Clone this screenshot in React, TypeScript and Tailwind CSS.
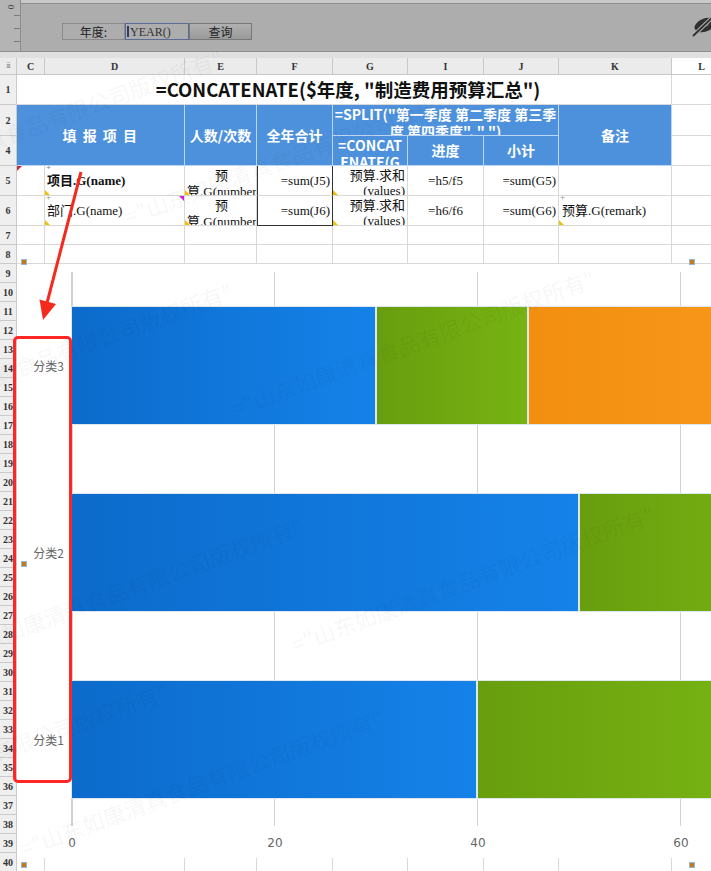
import React from 'react'

const GRID = 'grid grid-cols-[17px_28px_140px_72px_76px_75px_76px_75px_113px_60px]'
const CELL = 'relative overflow-hidden border-r border-b border-[#d8d8d8] bg-white'
const HEAD =
  "flex items-center justify-center overflow-hidden border-r border-b border-[#bcd6f2] bg-[#4d91dc] text-[14px] font-bold text-white font-['Noto_Sans_CJK_SC',sans-serif]"
const RN = 'flex items-center justify-center border-r border-b border-[#cacaca] bg-[#efefef] text-[10px] font-bold text-[#333]'
const COLHEAD = 'flex items-center justify-center border-r border-b border-[#c8c8c8]'

const SCALE = 10.15

type Color = 'blue' | 'green' | 'orange'

const segStyle: Record<Color, string> = {
  blue: 'bg-linear-to-r from-[#0c6bcb] to-[#1582e9]',
  green: 'bg-linear-to-r from-[#689e0e] to-[#77b313]',
  orange: 'bg-linear-to-r from-[#f28f10] to-[#f8981b]',
}

const bars: { label: string; segs: { v: number; c: Color }[] }[] = [
  { label: '分类3', segs: [{ v: 30, c: 'blue' }, { v: 15, c: 'green' }, { v: 25, c: 'orange' }] },
  { label: '分类2', segs: [{ v: 50, c: 'blue' }, { v: 20, c: 'green' }] },
  { label: '分类1', segs: [{ v: 40, c: 'blue' }, { v: 25, c: 'green' }] },
]

const ticks = [0, 20, 40, 60]

// faint copyright watermark, repeated over the page
const watermarks = [
  'left-[-140px] top-[172px]',
  'left-[125px] top-[200px]',
  'left-[-130px] top-[405px]',
  'left-[232px] top-[392px]',
  'left-[-60px] top-[640px]',
  'left-[292px] top-[628px]',
  'left-[-195px] top-[805px]',
  'left-[20px] top-[832px]',
]

const handles = [
  'left-[21px] top-[259px]',
  'left-[689px] top-[259px]',
  'left-[21px] top-[561px]',
  'left-[21px] top-[862px]',
  'left-[689px] top-[862px]',
]

function YellowMark() {
  return <div className="absolute bottom-0 left-0 h-0 w-0 border-t-[5px] border-l-[5px] border-t-transparent border-l-[#f2c200]" />
}

function Plus() {
  return <span className="absolute left-[1px] top-[-5px] text-[9px] leading-[12px] text-[#888]">+</span>
}

export default function App() {
  return (
    <div className="relative h-[871px] w-[711px] overflow-hidden bg-white font-['Liberation_Serif','Noto_Sans_CJK_SC',serif] text-[#111]">
      {/* report parameter toolbar */}
      <div className="flex h-[52px] border-b border-[#8d8d8d] bg-[#adadad]">
        <div className="flex w-[21px] flex-col border-r border-[#8d8d8d] bg-[#b4b4b4]">
          <div className="flex h-[14px] rotate-90 items-center justify-center text-[9px] text-[#444]">0</div>
          <div className="flex flex-col items-end gap-[12px] pt-[1px]">
            <div className="h-px w-[6px] bg-[#7a7a7a]" />
            <div className="h-px w-[6px] bg-[#7a7a7a]" />
            <div className="h-px w-[6px] bg-[#7a7a7a]" />
          </div>
        </div>
        <div className="flex min-w-0 flex-1 flex-col">
          <div className="h-[4px] border-b border-[#8d8d8d] bg-[#c9c9c9]" />
          <div className="flex flex-1 items-start pl-[41px] pt-[5px]">
            <div className="mt-[14px] flex h-[17px] text-[12px] font-['Noto_Sans_CJK_SC',sans-serif] text-[#222]">
              <div className="flex w-[63px] items-center justify-center border border-[#8b8b8b]">年度:</div>
              <div className="flex w-[64px] items-center border border-[#5b6d94] pl-[1px] font-['Liberation_Serif',serif] text-[12px] text-[#333]">
                <span className="mr-[1px] h-[11px] w-[2px] bg-[#2c3e6a]" />
                YEAR()
              </div>
              <div className="flex w-[63px] items-center justify-center border border-[#787878] bg-linear-to-b from-[#b0b0b0] to-[#9a9a9a]">
                查询
              </div>
            </div>
            <svg className="-mr-[6px] ml-auto mt-[4px] shrink-0" width="28" height="24" viewBox="0 0 28 24">
              <ellipse cx="16" cy="12" rx="11" ry="6.5" transform="rotate(-22 16 12)" fill="#2f2f2f" />
              <ellipse cx="17" cy="11.5" rx="3" ry="2.2" transform="rotate(-22 17 11.5)" fill="#5a5a5a" />
              <line x1="4" y1="23" x2="27" y2="1" stroke="#adadad" strokeWidth="4" />
              <line x1="4" y1="23" x2="27" y2="1" stroke="#2f2f2f" strokeWidth="1.8" />
            </svg>
          </div>
        </div>
      </div>
      <div className="h-[6px] bg-[#e0e0e0]" />

      {/* column headers */}
      <div className={`${GRID} h-[17px] bg-[#ebebeb] text-[10px] font-bold text-[#333]`}>
        <div className={`${COLHEAD} text-[8px] font-normal tracking-[-1px] text-[#888]`}>iii</div>
        <div className={COLHEAD}>C</div>
        <div className={COLHEAD}>D</div>
        <div className={COLHEAD}>E</div>
        <div className={COLHEAD}>F</div>
        <div className={COLHEAD}>G</div>
        <div className={COLHEAD}>I</div>
        <div className={COLHEAD}>J</div>
        <div className={COLHEAD}>K</div>
        <div className={`${COLHEAD} bg-white`}>L</div>
      </div>

      {/* report template rows */}
      <div className={`${GRID} grid-rows-[30px_31px_30px_30px_30px_19px_19px] text-[13px]`}>
        <div className={`${RN} col-start-1 row-start-1`}>1</div>
        <div className={`${RN} col-start-1 row-start-2`}>2</div>
        <div className={`${RN} col-start-1 row-start-3`}>4</div>
        <div className={`${RN} col-start-1 row-start-4`}>5</div>
        <div className={`${RN} col-start-1 row-start-5`}>6</div>
        <div className={`${RN} col-start-1 row-start-6`}>7</div>
        <div className={`${RN} col-start-1 row-start-7`}>8</div>

        <div className={`${CELL} col-span-8 col-start-2 row-start-1 flex items-center justify-center whitespace-nowrap pl-[8px] font-['Noto_Sans_CJK_SC',sans-serif] text-[18.5px] font-bold`}>
          =CONCATENATE($年度, "制造费用预算汇总")
        </div>
        <div className={`${CELL} col-start-10 row-start-1`} />

        <div className={`${HEAD} col-span-2 col-start-2 row-span-2 row-start-2 tracking-[1.5px]`}>填 报 项 目</div>
        <div className={`${HEAD} col-start-4 row-span-2 row-start-2`}>人数/次数</div>
        <div className={`${HEAD} col-start-5 row-span-2 row-start-2`}>全年合计</div>
        <div className={`${HEAD} col-span-3 col-start-6 row-start-2 items-start pt-[1px] text-center text-[13.5px] leading-[17px]`}>
          =SPLIT("第一季度 第二季度 第三季度 第四季度", " ")
        </div>
        <div className={`${HEAD} col-start-9 row-span-2 row-start-2`}>备注</div>
        <div className={`${CELL} col-start-10 row-start-2`} />
        <div className={`${HEAD} col-start-6 row-start-3 items-start break-all px-[3px] pt-[1px] text-center text-[13.5px] leading-[17px]`}>
          =CONCATENATE(G3,"预算")
        </div>
        <div className={`${HEAD} col-start-7 row-start-3`}>进度</div>
        <div className={`${HEAD} col-start-8 row-start-3`}>小计</div>
        <div className={`${CELL} col-start-10 row-start-3`} />

        {/* row 5 */}
        <div className={`${CELL} col-start-2 row-start-4`}>
          <div className="absolute left-0 top-0 h-0 w-0 border-r-[5px] border-t-[5px] border-r-transparent border-t-[#c0303a]" />
        </div>
        <div className={`${CELL} col-start-3 row-start-4 flex items-center pl-[2px] font-bold`}>
          <Plus />
          项目.G(name)
          <YellowMark />
        </div>
        <div className={`${CELL} col-start-4 row-start-4 pl-[2px] pt-[2px] text-center leading-[16px]`}>
          预算.G(number)
          <YellowMark />
        </div>
        <div className={`${CELL} col-start-5 row-start-4 flex items-center justify-end border-l border-x-[#333] pr-[2px]`}>=sum(J5)</div>
        <div className={`${CELL} col-start-6 row-start-4 pr-[2px] pt-[2px] text-right leading-[15px]`}>
          预算.求和(values)
          <YellowMark />
        </div>
        <div className={`${CELL} col-start-7 row-start-4 flex items-center justify-center`}>=h5/f5</div>
        <div className={`${CELL} col-start-8 row-start-4 flex items-center justify-end pr-[2px]`}>=sum(G5)</div>
        <div className={`${CELL} col-start-9 row-start-4`} />
        <div className={`${CELL} col-start-10 row-start-4`} />

        {/* row 6 */}
        <div className={`${CELL} col-start-2 row-start-5`} />
        <div className={`${CELL} col-start-3 row-start-5 flex items-center pl-[2px]`}>
          <Plus />
          部门.G(name)
          <YellowMark />
          <div className="absolute right-0 top-0 h-0 w-0 border-l-[5px] border-t-[5px] border-l-transparent border-t-[#d020d8]" />
        </div>
        <div className={`${CELL} col-start-4 row-start-5 pl-[2px] pt-[2px] text-center leading-[16px]`}>
          预算.G(number)
          <YellowMark />
        </div>
        <div className={`${CELL} col-start-5 row-start-5 flex items-center justify-end border-l border-x-[#333] border-b-[#333] pr-[2px]`}>=sum(J6)</div>
        <div className={`${CELL} col-start-6 row-start-5 pr-[2px] pt-[2px] text-right leading-[15px]`}>
          预算.求和(values)
          <YellowMark />
        </div>
        <div className={`${CELL} col-start-7 row-start-5 flex items-center justify-center`}>=h6/f6</div>
        <div className={`${CELL} col-start-8 row-start-5 flex items-center justify-end pr-[2px]`}>=sum(G6)</div>
        <div className={`${CELL} col-start-9 row-start-5 flex items-center whitespace-nowrap pl-[3px]`}>
          <Plus />
          预算.G(remark)
          <YellowMark />
        </div>
        <div className={`${CELL} col-start-10 row-start-5`} />

        {/* rows 7, 8 */}
        {[6, 7].map((r) =>
          [2, 3, 4, 5, 6, 7, 8, 9, 10].map((c) => (
            <div key={`${r}-${c}`} className={CELL} style={{ gridRowStart: r, gridColumnStart: c }} />
          )),
        )}
      </div>

      {/* rows 9-40 with the floating chart over them */}
      <div className="relative">
        <div className={`${GRID} auto-rows-[19px]`}>
          {Array.from({ length: 32 }, (_, i) => (
            <React.Fragment key={i}>
              <div className={RN}>{i + 9}</div>
              {Array.from({ length: 9 }, (_, j) => (
                <div key={j} className="border-r border-b border-[#d8d8d8]" />
              ))}
            </React.Fragment>
          ))}
        </div>

        <div className="absolute left-[17px] top-0 h-[594px] w-[694px] overflow-hidden bg-white pl-[5px] pt-[8px]">
          <div className="flex">
            <div className="flex w-[49px] shrink-0 flex-col gap-[68px] pt-[34px]">
              {bars.map((b) => (
                <div
                  key={b.label}
                  className="flex h-[119px] items-center justify-end pr-[7px] font-['Noto_Sans_CJK_SC',sans-serif] text-[12px] text-[#666]"
                >
                  {b.label}
                </div>
              ))}
            </div>
            <div className="relative h-[554px] w-[640px] shrink-0 overflow-hidden">
              {ticks.map((v) => (
                <div
                  key={v}
                  className={v === 0 ? 'absolute bottom-0 top-0 w-[2px] bg-[#d0d0d0]' : 'absolute bottom-0 top-0 w-px bg-[#d2d2d2]'}
                  style={{ left: v * SCALE }}
                />
              ))}
              <div className="relative flex flex-col gap-[68px] pt-[34px]">
                {bars.map((b) => (
                  <div key={b.label} className="flex h-[119px]">
                    {b.segs.map((s, i) => (
                      <div
                        key={i}
                        className={`${segStyle[s.c]} h-full shrink-0 border border-[#dfe7ee]`}
                        style={{ width: s.v * SCALE }}
                      />
                    ))}
                  </div>
                ))}
              </div>
            </div>
          </div>
          <div className="relative ml-[49px] mt-[10px] h-[14px] font-['DejaVu_Sans',sans-serif] text-[12px] text-[#666]">
            {ticks.map((v) => (
              <span key={v} className="absolute top-0 -translate-x-1/2 leading-[14px]" style={{ left: v * SCALE + 1 }}>
                {v}
              </span>
            ))}
          </div>
        </div>
      </div>

      {/* chart selection handles */}
      {handles.map((h) => (
        <div key={h} className={`absolute h-[6px] w-[6px] border border-[#93b8df] bg-[#c47a18] ${h}`} />
      ))}

      {/* watermark */}
      {watermarks.map((w) => (
        <div
          key={w}
          className={`pointer-events-none absolute origin-left rotate-[-20deg] whitespace-nowrap font-['Noto_Sans_CJK_SC',sans-serif] text-[22px] text-black/[0.05] ${w}`}
        >
          ="山东如康清真食品有限公司版权所有"
        </div>
      ))}

      {/* annotation: red arrow and box */}
      <svg className="pointer-events-none absolute left-0 top-0" width="711" height="871">
        <line x1="81" y1="172" x2="47" y2="303" stroke="#f52a1e" strokeWidth="3" />
        <polygon points="43,320 56,304 39.5,299.5" fill="#f52a1e" />
      </svg>
      <div className="pointer-events-none absolute left-[13px] top-[336px] h-[447px] w-[59px] rounded-[5px] border-[3px] border-[#ff2626]" />
    </div>
  )
}
